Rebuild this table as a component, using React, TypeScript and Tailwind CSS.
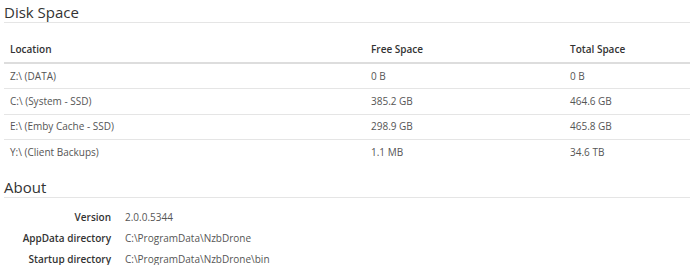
const disks = [
  { location: 'Z:\\ (DATA)', free: '0 B', total: '0 B' },
  { location: 'C:\\ (System - SSD)', free: '385.2 GB', total: '464.6 GB' },
  { location: 'E:\\ (Emby Cache - SSD)', free: '298.9 GB', total: '465.8 GB' },
  { location: 'Y:\\ (Client Backups)', free: '1.1 MB', total: '34.6 TB' },
]

const about = [
  { label: 'Version', value: '2.0.0.5344' },
  { label: 'AppData directory', value: 'C:\\ProgramData\\NzbDrone' },
  { label: 'Startup directory', value: 'C:\\ProgramData\\NzbDrone\\bin' },
]

export default function App() {
  return (
    <div
      className="w-[690px] h-[265px] overflow-hidden bg-white pl-[4px] text-[10px] text-[#555]"
      style={{ fontFamily: '"Open Sans", "Noto Sans", sans-serif' }}
    >
      {/* Disk Space */}
      <div className="text-[15px] leading-[20px] pt-[2px] text-[#333] border-b border-[#e5e5e5]">
        Disk Space
      </div>

      <table className="mt-[14px] w-full border-collapse">
        <thead>
          <tr className="border-b-2 border-[#ddd] text-[#333] font-semibold">
            <th className="w-[361px] h-[26px] px-[6px] text-left font-semibold">Location</th>
            <th className="w-[199px] px-[6px] text-left font-semibold">Free Space</th>
            <th className="px-[6px] text-left font-semibold">Total Space</th>
          </tr>
        </thead>
        <tbody>
          {disks.map((d, i) => (
            <tr key={d.location} className={i < disks.length - 1 ? 'border-b border-[#e5e5e5]' : ''}>
              <td className="h-[25.5px] px-[6px]">{d.location}</td>
              <td className="px-[6px]">{d.free}</td>
              <td className="px-[6px]">{d.total}</td>
            </tr>
          ))}
        </tbody>
      </table>

      {/* About */}
      <div className="mt-[12px] text-[15px] leading-[20px] text-[#333] border-b border-[#e5e5e5]">
        About
      </div>

      <div className="mt-[9px] flex flex-col">
        {about.map(a => (
          <div key={a.label} className="flex h-[21px] items-center">
            <div className="w-[107px] text-right font-semibold text-[#333]">{a.label}</div>
            <div className="ml-[14px]">{a.value}</div>
          </div>
        ))}
      </div>
    </div>
  )
}
